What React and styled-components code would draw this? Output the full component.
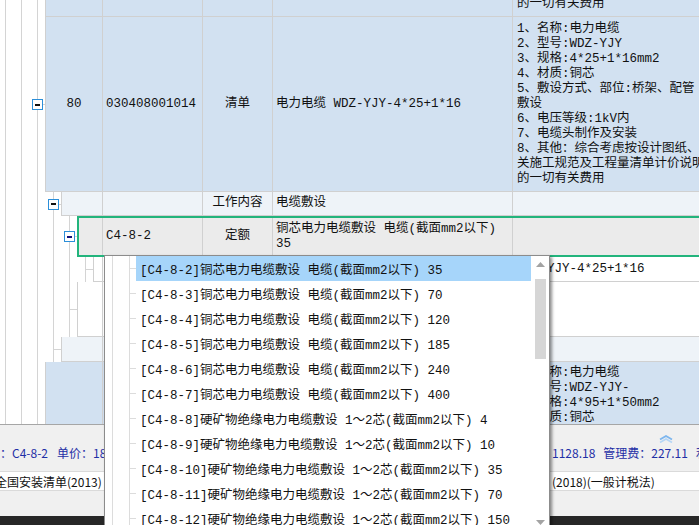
import React from 'react'
import styled, { createGlobalStyle } from 'styled-components'

const GRID_FONT = `"Liberation Mono", "Noto Sans CJK SC", monospace`
const UI_FONT = `"Noto Sans CJK SC", "Noto Sans", sans-serif`

const GlobalStyle = createGlobalStyle`
  html, body { margin: 0; padding: 0; background: #fff; }
  body { font-family: ${GRID_FONT}; }
`

const tones = {
  blue: '#d2e1f1',
  light: '#eef3f8',
  gray: '#ebebeb',
  white: '#ffffff',
}

const Screen = styled.div`
  position: relative;
  width: 699px;
  height: 525px;
  overflow: hidden;
  display: flex;
  flex-direction: column;
  background: #fff;
`

const GridArea = styled.div`
  flex: 0 0 424px;
  overflow: hidden;
  font-family: ${GRID_FONT};
  font-size: 12.5px;
  color: #111;
`

// the list is scrolled: the item above row 80 is mostly out of view
const GridScroll = styled.div`
  margin-top: -158px;
`

const Row = styled.div`
  display: flex;
  height: ${p => p.$h}px;
`

const Gutter = styled.div`
  flex: 0 0 ${p => 29 + 16 * p.$level}px;
  display: flex;
  align-items: center;
  justify-content: flex-end;
  padding-right: 2px;
  box-sizing: border-box;
  background:
    linear-gradient(#d4d4d4, #d4d4d4) right center / 8px 1px no-repeat,
    repeating-linear-gradient(to right, transparent 0 5px, #d4d4d4 5px 6px, transparent 6px 16px);
`

const Expander = styled.span`
  width: 11px;
  height: 11px;
  box-sizing: border-box;
  border: 1px solid #2c8fd9;
  background: #fff;
  display: flex;
  align-items: center;
  justify-content: center;

  &::before {
    content: '';
    width: 5px;
    height: 2px;
    background: ${p => (p.$active ? '#10107a' : '#111')};
  }
`

const Body = styled.div`
  flex: 1;
  min-width: 0;
  display: grid;
  grid-template-columns: 1fr 100px 70px 240px 186px;
  box-sizing: border-box;
  background: ${p => tones[p.$tone]};
  border-left: 1px solid #d0d0d0;
  border-bottom: 1px solid #d0d0d0;
  ${p => p.$active && `
    border: 2px solid #22b47c;
    border-right: 0;
  `}
`

const Cell = styled.div`
  display: flex;
  flex-direction: column;
  justify-content: ${p => (p.$top ? 'flex-start' : 'center')};
  align-items: ${p => (p.$center ? 'center' : 'flex-start')};
  padding: ${p => (p.$top ? '4px' : '0')} 3px 0;
  border-right: 1px solid #d0d0d0;
  overflow: hidden;
  white-space: nowrap;
  line-height: 15px;

  &:last-child {
    border-right: 0;
    padding-left: 4px;
  }
`

const Line = styled.div`
  height: 15px;
`

const Dropdown = styled.div`
  position: absolute;
  left: 104px;
  top: 255px;
  width: 446px;
  height: 277px;
  box-sizing: border-box;
  border: 1px solid #8c8c8c;
  background: #fff;
  box-shadow: 2px 2px 3px rgba(0, 0, 0, 0.45);
  display: flex;
  font-family: ${GRID_FONT};
  font-size: 12.5px;
  color: #111;
  z-index: 10;
`

const List = styled.div`
  flex: 1;
  display: flex;
  flex-direction: column;
`

const Item = styled.div`
  flex: 0 0 25px;
  display: flex;
`

const TreeLines = styled.span`
  flex: 0 0 31px;
  background:
    linear-gradient(#dcdcdc, #dcdcdc) 7px 0 / 1px 100% no-repeat,
    linear-gradient(#dcdcdc, #dcdcdc) 24px 0 / 1px 100% no-repeat,
    linear-gradient(#dcdcdc, #dcdcdc) 24px 50% / 7px 1px no-repeat;
`

const ItemText = styled.span`
  flex: 1;
  display: flex;
  align-items: center;
  padding-left: 4px;
  white-space: nowrap;
  overflow: hidden;
  background: ${p => (p.$selected ? '#a6d5fa' : 'transparent')};
`

const Scrollbar = styled.div`
  flex: 0 0 18px;
  display: flex;
  flex-direction: column;
  background: #fff;
`

const ScrollButton = styled.div`
  flex: 0 0 17px;
  display: flex;
  align-items: center;
  justify-content: center;
  padding-left: 1px;
`

const Thumb = styled.div`
  flex: 0 0 80px;
  margin: 6px 3px 0 4px;
  background: #d6d6d6;
`

const Track = styled.div`
  flex: 1;
`

const Panel = styled.div`
  flex: 1;
  display: flex;
  flex-direction: column;
  background: #f0f0f0;
  border-top: 1px solid #a6a6a6;
  font-family: ${UI_FONT};
  font-size: 12px;
`

const CollapseBar = styled.div`
  flex: 0 0 18px;
  display: flex;
  justify-content: flex-end;
  align-items: flex-end;
  padding-right: 26px;
`

// left part is hidden behind the open dropdown from x=104 to x=552
const SplitLine = styled.div`
  display: grid;
  grid-template-columns: 104px 448px 1fr;
  align-items: center;
  white-space: nowrap;
  overflow: hidden;

  & > :first-child {
    overflow: hidden;
  }
`

const StatusLine = styled(SplitLine)`
  flex: 0 0 19px;
  color: #1f2fa6;
`

const FieldRow = styled(SplitLine)`
  flex: 0 0 20px;
  margin-top: 9px;
  box-sizing: border-box;
  background: #fff;
  border-top: 1px solid #dadada;
  border-bottom: 1px solid #dadada;
  color: #111;
`

const Segment = styled.div`
  display: flex;
  gap: ${p => p.$gap ?? 9}px;
  margin-left: ${p => p.$shift || 0}px;
`

const Spacer = styled.div`
  flex: 1;
`

const DarkBar = styled.div`
  flex: 0 0 9px;
  background: #272727;
`

const descLines = spec => [
  '1、名称:电力电缆',
  spec.model,
  `3、规格:${spec.size}mm2`,
  '4、材质:铜芯',
  '5、敷设方式、部位:桥架、配管',
  '敷设',
  '6、电压等级:1kV内',
  '7、电缆头制作及安装',
  '8、其他：综合考虑按设计图纸、相',
  '关施工规范及工程量清单计价说明',
  '的一切有关费用',
]

const rows = [
  {
    level: 1, h: 175, tone: 'blue',
    desc: descLines({ model: '2、型号:WDZ-YJY', size: '4*35+1*16' }),
  },
  {
    level: 1, h: 175, tone: 'blue', seq: '80', code: '030408001014', type: '清单', open: true,
    name: ['电力电缆 WDZ-YJY-4*25+1*16'],
    desc: descLines({ model: '2、型号:WDZ-YJY', size: '4*25+1*16' }),
  },
  { level: 2, h: 24, tone: 'light', type: '工作内容', open: true, name: ['电缆敷设'] },
  {
    level: 3, h: 41, tone: 'gray', code: 'C4-8-2', type: '定额', open: true, active: true,
    name: ['铜芯电力电缆敷设 电缆(截面mm2以下)', '35'],
  },
  { level: 4, h: 25, tone: 'white', desc: ['WDZ-YJY-4*25+1*16'] },
  { level: 3, h: 55, tone: 'white' },
  { level: 2, h: 25, tone: 'light' },
  {
    level: 1, h: 175, tone: 'blue', top: true,
    desc: descLines({ model: '2、型号:WDZ-YJY-', size: '4*95+1*50' }).slice(0, 4),
  },
]

const copper = '铜芯电力电缆敷设 电缆(截面mm2以下)'
const mineral = '硬矿物绝缘电力电缆敷设 1～2芯(截面mm2以下)'

const choices = [
  ['C4-8-2', copper, '35'],
  ['C4-8-3', copper, '70'],
  ['C4-8-4', copper, '120'],
  ['C4-8-5', copper, '185'],
  ['C4-8-6', copper, '240'],
  ['C4-8-7', copper, '400'],
  ['C4-8-8', mineral, '4'],
  ['C4-8-9', mineral, '10'],
  ['C4-8-10', mineral, '35'],
  ['C4-8-11', mineral, '70'],
  ['C4-8-12', mineral, '150'],
]

const Arrow = ({ down }) => (
  <svg width="9" height="5" viewBox="0 0 9 5">
    <polygon points={down ? '0,0 9,0 4.5,5' : '0,5 4.5,0 9,5'} fill="#a3a3a3" />
  </svg>
)

const GridRow = ({ row }) => (
  <Row $h={row.h}>
    <Gutter $level={row.level}>
      {row.open && <Expander $active={row.active} />}
    </Gutter>
    <Body $tone={row.tone} $active={row.active}>
      <Cell $center>{row.seq}</Cell>
      <Cell>{row.code}</Cell>
      <Cell $center>{row.type}</Cell>
      <Cell>
        {(row.name || []).map((t, i) => <Line key={i}>{t}</Line>)}
      </Cell>
      <Cell $top={row.top}>
        {(row.desc || []).map((t, i) => <Line key={i}>{t}</Line>)}
      </Cell>
    </Body>
  </Row>
)

const App = () => {
  return (
    <>
      <GlobalStyle />
      <Screen>
        <GridArea>
          <GridScroll>
            {rows.map((r, i) => <GridRow key={i} row={r} />)}
          </GridScroll>
        </GridArea>

        <Panel>
          <CollapseBar>
            <svg width="14" height="8" viewBox="0 0 14 8">
              <path d="M1 4.5 L7 1 L13 4.5" fill="none" stroke="#7db6ee" strokeWidth="1.8" />
              <path d="M1 7.5 L7 4 L13 7.5" fill="none" stroke="#b5d6f6" strokeWidth="1.6" />
            </svg>
          </CollapseBar>
          <StatusLine>
            <Segment $shift={-24}>
              <span>编码：C4-8-2</span>
              <span>单价：1845.32</span>
            </Segment>
            <span />
            <Segment $gap={8}>
              <span>1128.18</span>
              <span>管理费：227.11</span>
              <span>利润</span>
            </Segment>
          </StatusLine>
          <FieldRow>
            <Segment $shift={-5}>全国安装清单(2013)</Segment>
            <span />
            <Segment>(2018)(一般计税法)</Segment>
          </FieldRow>
          <Spacer />
          <DarkBar />
        </Panel>

        <Dropdown>
          <List>
            {choices.map(([code, name, size], i) => (
              <Item key={code}>
                <TreeLines />
                <ItemText $selected={i === 0}>{`[${code}]${name} ${size}`}</ItemText>
              </Item>
            ))}
          </List>
          <Scrollbar>
            <ScrollButton><Arrow /></ScrollButton>
            <Thumb />
            <Track />
            <ScrollButton><Arrow down /></ScrollButton>
          </Scrollbar>
        </Dropdown>
      </Screen>
    </>
  )
}

export default App
